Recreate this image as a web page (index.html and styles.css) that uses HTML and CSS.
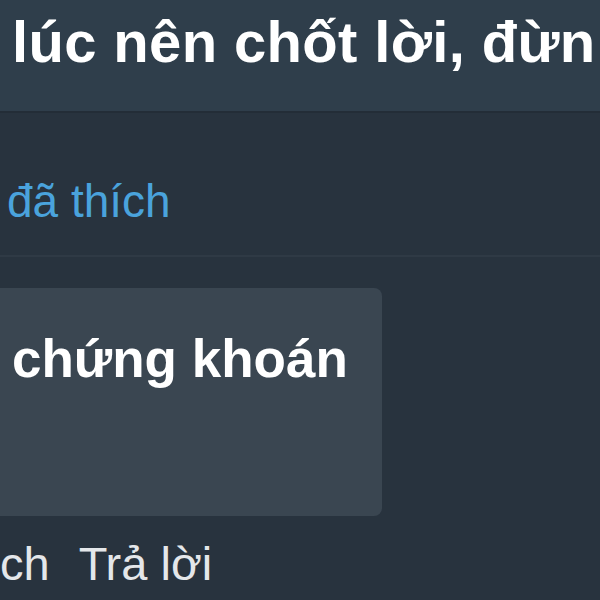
FILE: index.html
```html
<!DOCTYPE html>
<html lang="vi">
<head>
<meta charset="utf-8">
<link rel="stylesheet" href="styles.css">
</head>
<body>
<div class="page">
  <header class="topic">
    <h1 class="topic-title">lúc nên chốt lời, đừn</h1>
  </header>
  <div class="likes">
    <span class="likes-text">đã thích</span>
  </div>
  <div class="comment">
    <div class="bubble">
      <p class="bubble-text">chứng khoán</p>
    </div>
    <div class="actions">
      <span class="action">ch</span>
      <span class="action">Trả lời</span>
    </div>
  </div>
</div>
</body>
</html>
```

FILE: styles.css
```css
html, body {
  margin: 0;
  padding: 0;
  background: #28333e;
}
.page {
  width: 600px;
  height: 600px;
  overflow: hidden;
  font-family: "Liberation Sans", Arial, sans-serif;
  background: #28333e;
}
.topic {
  height: 113px;
  background: #2f3e4b;
  border-bottom: 2px solid #232d37;
  box-sizing: border-box;
  padding: 9px 0 0 12px;
}
.topic-title {
  margin: 0;
  font-size: 58px;
  line-height: 66px;
  font-weight: bold;
  color: #ffffff;
  white-space: nowrap;
  letter-spacing: 0.35px;
}
.likes {
  height: 144px;
  box-sizing: border-box;
  border-bottom: 2px solid #2f3a45;
  padding: 62px 0 0 7px;
}
.likes-text {
  font-size: 46px;
  line-height: 52px;
  color: #4aa3dc;
}
.comment {
  padding-top: 31px;
}
.bubble {
  width: 382px;
  height: 228px;
  box-sizing: border-box;
  background: #3a4651;
  border-radius: 0 8px 8px 0;
  padding: 42px 0 0 12px;
}
.bubble-text {
  margin: 0;
  font-size: 53px;
  line-height: 58px;
  font-weight: bold;
  color: #ffffff;
  white-space: nowrap;
}
.actions {
  display: flex;
  gap: 29px;
  padding-top: 22px;
}
.action {
  font-size: 47px;
  line-height: 52px;
  color: #e4e7ea;
}
```
